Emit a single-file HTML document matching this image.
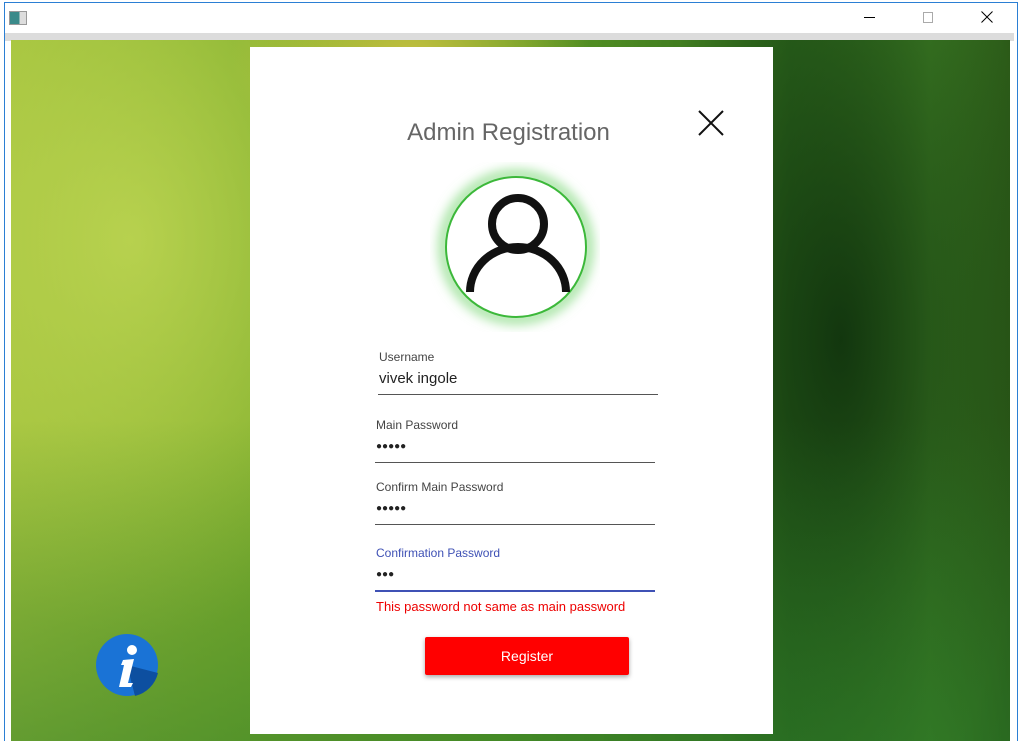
<!DOCTYPE html>
<html><head><style>
*{margin:0;padding:0;box-sizing:border-box}
body{width:1018px;height:741px;overflow:hidden;background:#fff;font-family:"Liberation Sans",sans-serif;position:relative}
.win{position:absolute;left:4px;top:2px;width:1014px;height:739px;border:1px solid #2b7fd4;border-bottom:none;background:#fff}
.gray{position:absolute;left:5px;top:33px;width:1009px;height:8px;background:#dcdcdc}
.bg{position:absolute;left:11px;top:40px;width:999px;height:701px;
background:
radial-gradient(ellipse 180px 120px at 400px 20px,rgba(220,200,70,.8),transparent),
radial-gradient(ellipse 300px 400px at 120px 200px,rgba(200,220,90,.7),transparent),
radial-gradient(ellipse 200px 500px at 830px 300px,rgba(10,40,10,.8),transparent),
linear-gradient(90deg,#9fc03a 0%,#7fae2c 25%,#5e9a24 50%,#2f6b1e 78%,#3d7d24 92%,#2b5a18 100%);}
.bgb{position:absolute;left:11px;top:420px;width:999px;height:321px;background:linear-gradient(180deg,transparent,rgba(40,120,40,.5))}
.card{position:absolute;left:250px;top:47px;width:523px;height:687px;background:#fff}
.title{position:absolute;left:0;width:100%;top:72px;text-align:center;font-size:24px;color:#666;padding-right:6px}
.lbl{position:absolute;font-size:12px;color:#444}
.val{position:absolute;font-size:15px;color:#222}
.dots{position:absolute;font-size:10px;color:#222;letter-spacing:0px}
.line{position:absolute;height:1px;background:#555}
</style></head><body>
<div class="win"></div>
<div style="position:absolute;left:9px;top:11px;width:18px;height:14px;border:1px solid #999;background:linear-gradient(90deg,#3a8a8a 60%,#ddd 60%)"></div>
<div style="position:absolute;left:864px;top:17px;width:11px;height:1px;background:#000"></div>
<div style="position:absolute;left:923px;top:12px;width:10px;height:11px;border:1px solid #aaa"></div>
<svg style="position:absolute;left:981px;top:11px" width="12" height="12"><path d="M0.5 0.5L11.5 11.5M11.5 0.5L0.5 11.5" stroke="#000" stroke-width="1"/></svg>
<div class="gray"></div>
<div class="bg"></div><div class="bgb"></div>
<svg style="position:absolute;left:95px;top:633px" width="64" height="64"><circle cx="32" cy="32" r="31" fill="#1a73d6"/><path d="M32 32 L63 40 A31 31 0 0 1 40 63Z" fill="#0d4fa0"/><circle cx="37" cy="17" r="5" fill="#fff"/><path d="M28 27 L39 26 L33 50 L38 50 L36 54 L24 54 L29 32 L26 32Z" fill="#fff"/></svg>
<div class="card">
<div class="title">Admin Registration</div>
<svg style="position:absolute;left:447px;top:62px" width="28" height="28"><path d="M2 2L26 26M26 2L2 26" stroke="#111" stroke-width="2"/></svg>
<svg style="position:absolute;left:180px;top:115px" width="170" height="170"><defs><filter id="g"><feGaussianBlur stdDeviation="6"/></filter></defs><circle cx="86" cy="85" r="72" fill="none" stroke="#7fd87a" stroke-width="8" filter="url(#g)"/><circle cx="86" cy="85" r="70" fill="#fff" stroke="#3cb83a" stroke-width="2"/><circle cx="88" cy="62" r="26" fill="none" stroke="#111" stroke-width="8"/><path d="M40 130 A48 45 0 0 1 136 130" fill="none" stroke="#111" stroke-width="8"/></svg>
<div class="lbl" style="left:129px;top:303px">Username</div>
<div class="val" style="left:129px;top:323px">vivek ingole</div>
<div class="line" style="left:128px;top:347px;width:280px"></div>
<div class="lbl" style="left:126px;top:371px">Main Password</div>
<div class="dots" style="left:126px;top:394px">●●●●●</div>
<div class="line" style="left:125px;top:415px;width:280px"></div>
<div class="lbl" style="left:126px;top:433px">Confirm Main Password</div>
<div class="dots" style="left:126px;top:456px">●●●●●</div>
<div class="line" style="left:125px;top:477px;width:280px"></div>
<div class="lbl" style="left:126px;top:499px;color:#3f51b5">Confirmation Password</div>
<div class="dots" style="left:126px;top:522px">●●●</div>
<div class="line" style="left:125px;top:543px;width:280px;height:2px;background:#3f51b5"></div>
<div style="position:absolute;left:126px;top:552px;font-size:13px;color:#e00">This password not same as main password</div>
<div style="position:absolute;left:175px;top:590px;width:204px;height:38px;background:#f00;border-radius:2px;box-shadow:0 2px 5px rgba(0,0,0,.35);color:#fff;font-size:14px;text-align:center;line-height:38px">Register</div>
</div>
</body></html>
